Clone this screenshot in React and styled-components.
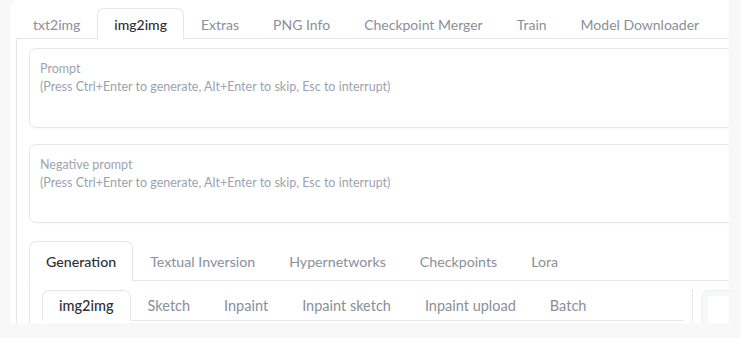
import React from 'react';
import styled, { createGlobalStyle } from 'styled-components';

const GlobalStyle = createGlobalStyle`
  html, body {
    margin: 0;
    padding: 0;
    background: #f8f8f9;
  }
  body {
    font-family: Lato, "Liberation Sans", sans-serif;
  }
`;

const Frame = styled.div`
  margin-left: 10px;
  width: 719px;
  height: 323px;
  background: #fff;
  border-top-left-radius: 8px;
  overflow: hidden;
`;

const Inner = styled.div`
  width: 780px;
  padding: 8px 0 0 6px;
`;

const TabNav = styled.div`
  display: flex;
  height: ${p => p.$h}px;
  position: relative;
  z-index: 1;
`;

const Tab = styled.button`
  all: unset;
  box-sizing: border-box;
  height: ${p => p.$h}px;
  padding: 0 16px;
  display: flex;
  align-items: center;
  font-family: Lato, "Liberation Sans", sans-serif;
  font-size: ${p => p.$size}px;
  white-space: nowrap;
  color: ${p => (p.$active ? '#2b2f36' : '#8a8f99')};
  font-weight: ${p => (p.$active ? 500 : 400)};
  border: 1px solid ${p => (p.$active ? '#e5e7eb' : 'transparent')};
  border-bottom-color: ${p => (p.$active ? '#fff' : 'transparent')};
  border-radius: 7px 7px 0 0;
  background: ${p => (p.$active ? '#fff' : 'transparent')};
`;

const Panel = styled.div`
  border: 1px solid #e5e7eb;
  margin-top: -1px;
  padding: ${p => p.$pt}px 12px 10px 12px;
`;

const PromptBox = styled.div`
  box-sizing: border-box;
  height: ${p => p.$h}px;
  margin-bottom: ${p => p.$mb}px;
  border: 1px solid #e5e7eb;
  border-radius: 7px;
  padding: 11px 10px;
  box-shadow: 0 1px 2px rgba(0, 0, 0, 0.03);
  font-size: 12.5px;
  line-height: 18px;
  color: #9ca3af;
`;

const Row = styled.div`
  display: flex;
  align-items: stretch;
`;

const LeftCol = styled.div`
  width: 642px;
  flex: none;
`;

const Resizer = styled.div`
  width: 17px;
  flex: none;
  display: flex;
  justify-content: center;
  &::after {
    content: '';
    margin-left: -1px;
    border-left: 1px dotted #d4d7dc;
    height: 40px;
  }
`;

const RightCol = styled.div`
  flex: none;
  width: 90px;
  height: 60px;
  border: 1px solid #eceef1;
  border-radius: 8px;
  background: #f6f7f9;
  padding: 5px 6px;
  box-sizing: border-box;
`;

const Gallery = styled.div`
  height: 100%;
  background: #fff;
  border-radius: 2px;
`;

const SubNav = styled.div`
  display: flex;
  border-bottom: 1px solid #e5e7eb;
  height: 31px;
  box-sizing: border-box;
  & > * {
    margin-bottom: -1px;
  }
`;

const topTabs = ['txt2img', 'img2img', 'Extras', 'PNG Info', 'Checkpoint Merger', 'Train', 'Model Downloader'];
const midTabs = ['Generation', 'Textual Inversion', 'Hypernetworks', 'Checkpoints', 'Lora'];
const subTabs = ['img2img', 'Sketch', 'Inpaint', 'Inpaint sketch', 'Inpaint upload', 'Batch'];

const hint = '(Press Ctrl+Enter to generate, Alt+Enter to skip, Esc to interrupt)';

export default function App() {
  return (
    <>
      <GlobalStyle />
      <Frame>
        <Inner>
          <TabNav $h={31}>
            {topTabs.map(t => (
              <Tab key={t} $h={32} $size={14} $active={t === 'img2img'}>{t}</Tab>
            ))}
          </TabNav>
          <Panel $pt={9}>
            <PromptBox $h={80} $mb={16}>
              Prompt<br />{hint}
            </PromptBox>
            <PromptBox $h={79} $mb={18}>
              Negative prompt<br />{hint}
            </PromptBox>
            <TabNav $h={40}>
              {midTabs.map(t => (
                <Tab key={t} $h={41} $size={14.2} $active={t === 'Generation'}>{t}</Tab>
              ))}
            </TabNav>
            <Panel $pt={9}>
              <Row>
                <LeftCol>
                  <SubNav>
                    {subTabs.map(t => (
                      <Tab key={t} $h={31} $size={14.5} $active={t === 'img2img'}>{t}</Tab>
                    ))}
                  </SubNav>
                </LeftCol>
                <Resizer />
                <RightCol>
                  <Gallery />
                </RightCol>
              </Row>
            </Panel>
          </Panel>
        </Inner>
      </Frame>
    </>
  );
}
